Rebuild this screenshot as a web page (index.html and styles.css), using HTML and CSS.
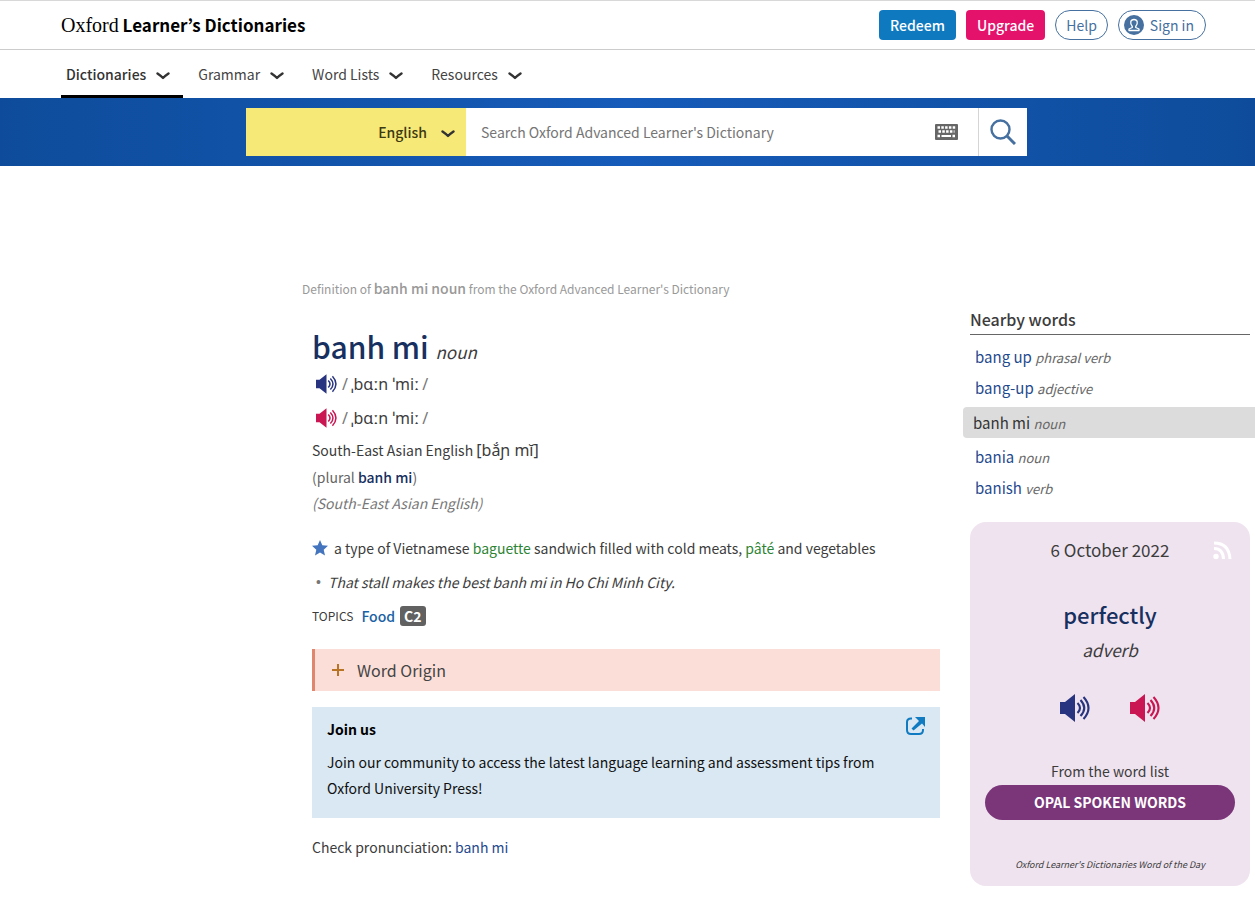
FILE: index.html
```html
<!DOCTYPE html>
<html lang="en">
<head>
	<meta charset="utf-8">
	<title>banh mi noun - Oxford Advanced Learner's Dictionary</title>
	<link rel="stylesheet" href="styles.css">
</head>
<body>
	<!-- shared icons -->
	<svg class="sprite" aria-hidden="true">
		<symbol id="arrow" viewBox="0 0 14 8"><path d="M1.500 1.500C4 3.200 5.500 4.500 7 6 8.500 4.500 10 3.200 12.500 1.500" fill="none" stroke="currentColor" stroke-width="2.400" stroke-linecap="round" stroke-linejoin="round"/></symbol>
		<symbol id="sound" viewBox="0 0 30 28">
			<path d="M0 8h5L15 0v28L5 20H0z" fill="currentColor"/>
			<path d="M17.500 9q5 5 0 10M20.500 6q7.500 8 0 16M23.500 3q10 11 0 22" fill="none" stroke="currentColor" stroke-width="2.100"/>
		</symbol>
	</svg>

	<div class="topbar">
		<a class="logo" href="#"><span>Oxford</span> Learner’s Dictionaries</a>
		<div class="account">
			<a class="btn redeem" href="#">Redeem</a>
			<a class="btn upgrade" href="#">Upgrade</a>
			<a class="btn round" href="#">Help</a>
			<a class="btn round signin" href="#">
				<svg width="20" height="20" viewBox="0 0 20 20"><circle cx="10" cy="10" r="10" fill="#45709f"/><path d="M8.300 11.500C5.500 8 6.500 4.500 10 4.500s4.500 3.500 1.700 7v1l3.300 1.500v1.500H5V14l3.300-1.500z" fill="none" stroke="#fff" stroke-width="1.300" stroke-linejoin="round"/></svg>
				Sign in
			</a>
		</div>
	</div>

	<nav class="menu">
		<a class="active" href="#">Dictionaries <svg width="14" height="8"><use href="#arrow"/></svg></a>
		<a href="#">Grammar <svg width="14" height="8"><use href="#arrow"/></svg></a>
		<a href="#">Word Lists <svg width="14" height="8"><use href="#arrow"/></svg></a>
		<a href="#">Resources <svg width="14" height="8"><use href="#arrow"/></svg></a>
	</nav>

	<form class="searchbar">
		<div class="lang">
			<select aria-label="Dictionary">
				<option>English</option>
			</select>
			<svg width="14" height="8"><use href="#arrow"/></svg>
		</div>
		<div class="field">
			<input type="text" aria-label="Search" placeholder="Search Oxford Advanced Learner's Dictionary">
			<button type="button" class="keyboard" aria-label="Keyboard">
				<svg width="23" height="16" viewBox="0 0 23 16"><rect width="23" height="16" rx="1" fill="#666"/><path d="M2.500 3.500h18M3.500 7.500h16M2.500 12h2.500M17.500 12h3" stroke="#fff" stroke-width="2.500" stroke-dasharray="2.500 1.300"/><path d="M6.500 12h9.500" stroke="#fff" stroke-width="2"/></svg>
			</button>
		</div>
		<button type="submit" class="go" aria-label="Go">
			<svg width="26" height="26" viewBox="0 0 26 26"><circle cx="10.500" cy="10.500" r="9" fill="none" stroke="#45709f" stroke-width="2.400"/><path d="M17 17l8 8" stroke="#45709f" stroke-width="3"/></svg>
		</button>
	</form>

	<div class="container">
		<main>
			<p class="definition-title">Definition of <b>banh mi noun</b> from the Oxford Advanced Learner's Dictionary</p>

			<div class="entry">
				<h1>banh mi <i>noun</i></h1>
				<div class="phon">
					<svg class="uk" width="21" height="20"><use href="#sound"/></svg>
					<span class="slash">/</span>ˌbɑːn ˈmiː<span class="slash">/</span>
				</div>
				<div class="phon">
					<svg class="us" width="21" height="20"><use href="#sound"/></svg>
					<span class="slash">/</span>ˌbɑːn ˈmiː<span class="slash">/</span>
				</div>
				<div class="variant">South-East Asian English <span class="ipa">[bắɲ mĭ]</span></div>
				<div class="plural">(plural <b>banh mi</b>)</div>
				<div class="region">(South-East Asian English)</div>

				<div class="sense">
					<svg width="16" height="16" viewBox="0 0 16 16"><path d="M8 0l2.300 5.300 5.700.5-4.300 3.900L13 15.500l-5-3-5 3 1.300-5.800L0 5.800l5.700-.5z" fill="#4374bd"/></svg>
					<p>a type of Vietnamese <a href="#">baguette</a> sandwich filled with cold meats, <a href="#">pâté</a> and vegetables</p>
				</div>
				<ul class="examples">
					<li>That stall makes the best banh mi in Ho Chi Minh City.</li>
				</ul>
				<div class="topics"><span>TOPICS</span><a href="#">Food</a><b>C2</b></div>

				<button type="button" class="origin">
					<svg width="12" height="12" viewBox="0 0 12 12"><path d="M6 0v12M0 6h12" stroke="#b87325" stroke-width="2"/></svg>
					Word Origin
				</button>

				<section class="join">
					<div class="join-head">
						<h2>Join us</h2>
						<a href="#" aria-label="Open">
							<svg width="19" height="18" viewBox="0 0 19 18"><path d="M6 1.500H5Q1 1.500 1 5v8q0 4 4 4h8q4 0 4-4v-1" fill="none" stroke="#117bc1" stroke-width="2"/><path d="M9 0h10v10l-3-3.500L7.500 13.500l-2-2L13 4z" fill="#117bc1"/></svg>
						</a>
					</div>
					<p>Join our community to access the latest language learning and assessment tips from Oxford University Press!</p>
				</section>

				<p class="check">Check pronunciation: <a href="#">banh mi</a></p>
			</div>
		</main>

		<aside>
			<h2 class="nearby-title">Nearby words</h2>
			<ul class="nearby">
				<li><a href="#">bang up <i>phrasal verb</i></a></li>
				<li><a href="#">bang-up <i>adjective</i></a></li>
				<li class="selected"><a href="#">banh mi <i>noun</i></a></li>
				<li><a href="#">bania <i>noun</i></a></li>
				<li><a href="#">banish <i>verb</i></a></li>
			</ul>

			<!-- word of the day -->
			<div class="wotd">
				<a class="rss" href="#" aria-label="RSS">
					<svg width="19" height="19" viewBox="0 0 19 19"><circle cx="3" cy="15.500" r="2.700" fill="#fff"/><path d="M1 7.500q9 0 9.500 10.500M1 2q15 0 16 16" fill="none" stroke="#fff" stroke-width="3"/></svg>
				</a>
				<div class="day">6 October 2022</div>
				<a class="word" href="#">perfectly</a>
				<div class="pos">adverb</div>
				<div class="sounds">
					<svg class="uk" width="30" height="28"><use href="#sound"/></svg>
					<svg class="us" width="30" height="28"><use href="#sound"/></svg>
				</div>
				<div class="from">From the word list</div>
				<a class="opal" href="#">OPAL SPOKEN WORDS</a>
				<div class="foot">Oxford Learner's Dictionaries Word of the Day</div>
			</div>
		</aside>
	</div>
</body>
</html>
```
FILE: styles.css
```css
*{
	margin: 0;
	padding: 0;
	box-sizing: border-box;
}
body{
	font-family: "Noto Sans CJK KR", "Noto Sans", sans-serif;
	font-size: 14px;
	line-height: 26px;
	color: #3c3c3c;
	background: #fff;
}
a{
	color: #1f4a8e;
	text-decoration: none;
}
ul{
	list-style: none;
}
svg{
	flex: none;
}
b,h1,h2{
	font-weight: 500;
}
.sprite{
	display: none;
}
.uk{
	color: #28347f;
}
.us{
	color: #ca1652;
}

/* header */
.topbar{
	display: flex;
	justify-content: space-between;
	align-items: center;
	height: 50px;
	padding: 0 49px 0 61px;
	border-top: 1px solid #d8d8d8;
	border-bottom: 1px solid #ccc;
}
.logo{
	font-size: 17px;
	font-weight: bold;
	color: #000;
}
.logo span{
	font-family: "Liberation Serif", serif;
	font-size: 20px;
	font-weight: normal;
}
.account{
	display: flex;
	gap: 10px;
}
.btn{
	display: flex;
	align-items: center;
	height: 30px;
	padding: 0 11px;
	border-radius: 4px;
	font-weight: 500;
	color: #fff;
}
.redeem{
	background: #0f79bf;
}
.upgrade{
	background: #e5126c;
}
.round{
	padding: 0 10px;
	border: 1px solid #45709f;
	border-radius: 15px;
	font-weight: normal;
	color: #45709f;
}
.signin{
	gap: 6px;
	padding: 0 11px 0 5px;
}

.menu{
	display: flex;
	gap: 10px;
	height: 48px;
	padding: 0 61px;
}
.menu a{
	display: flex;
	align-items: center;
	gap: 10px;
	padding: 3px 13px 0 5px;
	border-bottom: 3px solid transparent;
	color: #444;
}
.menu svg,.lang svg{
	margin-top: 3px;
	color: #333;
}
.menu .active{
	border-color: #000;
	font-weight: 500;
	color: #333;
}

.searchbar{
	display: flex;
	height: 68px;
	padding: 10px 228px 10px 246px;
	background: linear-gradient(90deg, #0e4c9b, #165bb9 50%, #0e4c9b);
}
.lang{
	display: flex;
	align-items: center;
	width: 220px;
	padding-right: 11px;
	background: #f6e978;
}
.lang select{
	flex: 1;
	height: 48px;
	padding-right: 14px;
	border: 0;
	background: none;
	appearance: none;
	font: inherit;
	font-weight: 500;
	color: #3d3913;
	text-align-last: right;
}
.field{
	display: flex;
	flex: 1;
	background: #fff;
}
.field input{
	flex: 1;
	min-width: 0;
	padding-left: 15px;
	border: 0;
	font: inherit;
}
.field input::placeholder{
	color: #757575;
}
.keyboard,.go{
	display: flex;
	align-items: center;
	justify-content: center;
	border: 0;
	background: #fff;
}
.keyboard{
	width: 63px;
}
.go{
	width: 49px;
	border-left: 1px solid #d5d5d5;
}

/* content */
.container{
	display: grid;
	grid-template-columns: 1fr 280px;
	gap: 30px;
	padding: 109px 5px 18px 302px;
}
.definition-title{
	font-size: 12px;
	color: #999;
}
.definition-title b{
	font-size: 14px;
}
.entry{
	padding: 24px 0 0 10px;
}
h1{
	font-size: 30px;
	line-height: 41px;
	color: #17305f;
}
h1 i{
	font-size: 17px;
	font-weight: normal;
	line-height: 20px;
	color: #3c3c3c;
}
.phon{
	display: flex;
	align-items: center;
	height: 34px;
	padding-left: 4px;
	font-family: "Noto Sans", sans-serif;
	font-size: 16px;
	white-space: pre;
}
.phon svg{
	margin-right: 2px;
}
.slash{
	margin: 0 3px;
	color: #777;
}
.ipa{
	font-family: "Noto Sans", sans-serif;
	font-size: 16px;
	line-height: 20px;
}
.variant{
	margin-top: 2px;
}
.plural{
	margin-top: 1px;
	color: #666;
}
.plural b{
	color: #17305f;
}
.region{
	font-style: italic;
	color: #777;
}
.sense{
	display: flex;
	align-items: center;
	gap: 6px;
	margin-top: 19px;
}
.sense a{
	color: #2d8534;
}
.examples{
	margin-top: 8px;
	font-style: italic;
}
.examples li{
	display: flex;
}
.examples li:before{
	width: 12px;
	padding-left: 4px;
	font-family: "Liberation Sans", sans-serif;
	font-style: normal;
	color: #777;
	content: '•';
}
.topics{
	display: flex;
	align-items: center;
	margin-top: 8px;
}
.topics span{
	margin-right: 8px;
	font-size: 12px;
}
.topics a{
	margin-right: 5px;
	font-weight: 500;
	color: #1a62a5;
}
.topics b{
	padding: 0 4px;
	border-radius: 3px;
	background: #616161;
	font-weight: bold;
	line-height: 20px;
	color: #fff;
}
.origin{
	display: flex;
	align-items: center;
	gap: 13px;
	width: 100%;
	height: 42px;
	margin-top: 20px;
	padding-left: 17px;
	border: 0;
	border-left: 3px solid #df866c;
	background: #fbded8;
	font: inherit;
	font-size: 16px;
	color: #444;
}
.join{
	margin-top: 16px;
	padding: 9px 15px 17px;
	background: #d9e8f2;
	color: #111;
}
.join-head{
	display: flex;
	justify-content: space-between;
	height: 33px;
}
.join h2{
	font-size: 14px;
	font-weight: bold;
	color: #000;
}
.join p{
	padding-right: 32px;
}
.check{
	margin-top: 16px;
}

/* sidebar */
aside{
	padding-top: 31px;
}
.nearby-title{
	padding-bottom: 2px;
	border-bottom: 1px solid #666;
	font-size: 16px;
}
.nearby{
	padding-top: 6px;
	font-size: 15px;
	line-height: 31px;
}
.nearby li{
	padding-left: 5px;
}
.nearby i{
	font-size: 13px;
	line-height: 20px;
	color: #666;
}
.nearby .selected{
	margin: 4px -5px 3px -7px;
	padding-left: 10px;
	border-radius: 4px 0 0 4px;
	background: #dcdcdc;
}
.nearby .selected a{
	color: #333;
}
.wotd{
	position: relative;
	margin-top: 19px;
	padding: 15px 15px 8px;
	border-radius: 16px;
	background: #efe3ef;
	text-align: center;
}
.rss{
	position: absolute;
	top: 19px;
	right: 18px;
	line-height: 0;
}
.day{
	font-size: 17px;
}
.word{
	display: block;
	margin-top: 34px;
	font-size: 22px;
	font-weight: 500;
	line-height: 34px;
	color: #17305f;
}
.pos{
	margin-top: 6px;
	font-size: 17px;
	font-style: italic;
}
.sounds{
	display: flex;
	justify-content: center;
	gap: 40px;
	margin: 31px 0 36px;
}
.from{
	font-size: 14px;
}
.opal{
	display: block;
	margin-top: 1px;
	border-radius: 18px;
	background: #7a3679;
	font-weight: bold;
	line-height: 35px;
	color: #fff;
}
.foot{
	margin-top: 32px;
	font-size: 9px;
	font-style: italic;
}
```
